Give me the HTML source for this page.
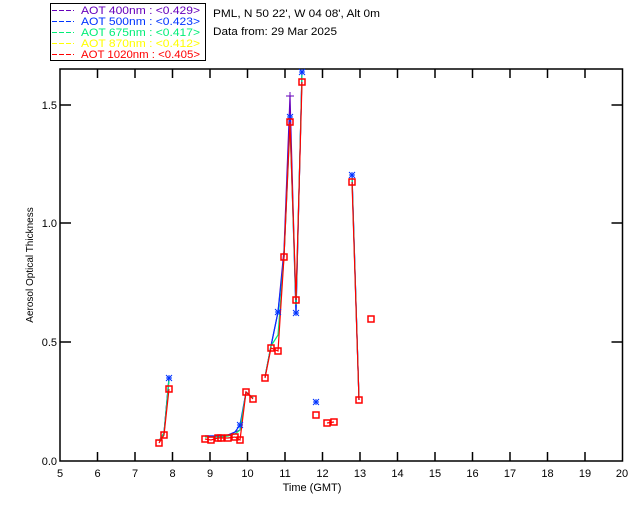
<!DOCTYPE html>
<html><head><meta charset="utf-8"><style>
html,body{margin:0;padding:0;background:#fff;}
svg{display:block;font-family:"Liberation Sans",sans-serif;font-size:11px;}
</style></head><body>
<svg width="640" height="512" viewBox="0 0 640 512" xmlns="http://www.w3.org/2000/svg">
<rect width="640" height="512" fill="#fff"/>
<!-- legend -->
<rect x="50.5" y="3.5" width="155" height="57" fill="none" stroke="#000"/>
<g stroke-width="1" stroke-dasharray="5,2">
<path d="M52 10.5h22" stroke="#6600bb"/>
<path d="M52 21.5h22" stroke="#0033ff"/>
<path d="M52 32.5h22" stroke="#00ee77"/>
<path d="M52 43.5h22" stroke="#ffff00"/>
<path d="M52 54.5h22" stroke="#ff0000"/>
</g>
<g font-size="11" xml:space="preserve">
<text x="81" y="14" fill="#6600bb" textLength="119" lengthAdjust="spacingAndGlyphs">AOT  400nm : &lt;0.429&gt;</text>
<text x="81" y="25" fill="#0033ff" textLength="119" lengthAdjust="spacingAndGlyphs">AOT  500nm : &lt;0.423&gt;</text>
<text x="81" y="36" fill="#00ee77" textLength="119" lengthAdjust="spacingAndGlyphs">AOT  675nm : &lt;0.417&gt;</text>
<text x="81" y="47" fill="#ffff00" textLength="119" lengthAdjust="spacingAndGlyphs">AOT  870nm : &lt;0.412&gt;</text>
<text x="81" y="58" fill="#ff0000" textLength="119" lengthAdjust="spacingAndGlyphs">AOT 1020nm : &lt;0.405&gt;</text>
<text x="213" y="17" fill="#000" textLength="167" lengthAdjust="spacingAndGlyphs">PML, N 50 22', W 04 08', Alt 0m</text>
<text x="213" y="35" fill="#000" textLength="124" lengthAdjust="spacingAndGlyphs">Data from: 29 Mar 2025</text>
</g>
<!-- axes -->
<g stroke="#000" stroke-width="1.5" fill="none">
<rect x="60" y="69" width="562.5" height="392"/>
<path d="M97.5 461v-9M135 461v-9M172.5 461v-9M210 461v-9M247.5 461v-9M285 461v-9M322.5 461v-9M360 461v-9M397.5 461v-9M435 461v-9M472.5 461v-9M510 461v-9M547.5 461v-9M585 461v-9
M97.5 69v9M135 69v9M172.5 69v9M210 69v9M247.5 69v9M285 69v9M322.5 69v9M360 69v9M397.5 69v9M435 69v9M472.5 69v9M510 69v9M547.5 69v9M585 69v9
M60 105h11M60 223h11M60 342h11M622.5 105h-11M622.5 223h-11M622.5 342h-11"/>
</g>
<g fill="#000" text-anchor="middle">
<text x="60" y="477">5</text><text x="97.5" y="477">6</text><text x="135" y="477">7</text><text x="172.5" y="477">8</text><text x="210" y="477">9</text><text x="247.5" y="477">10</text><text x="285" y="477">11</text><text x="322.5" y="477">12</text><text x="360" y="477">13</text><text x="397.5" y="477">14</text><text x="435" y="477">15</text><text x="472.5" y="477">16</text><text x="510" y="477">17</text><text x="547.5" y="477">18</text><text x="585" y="477">19</text><text x="622" y="477">20</text>
<text x="312" y="491">Time (GMT)</text>
<text transform="translate(33,265) rotate(-90)" font-size="10">Aerosol Optical Thickness</text>
</g>
<g fill="#000" text-anchor="end">
<text x="57" y="109">1.5</text><text x="57" y="227">1.0</text><text x="57" y="346">0.5</text><text x="57" y="465">0.0</text>
</g>
<!-- data lines -->
<g fill="none" stroke-width="1.2">
<path stroke="#6600bb" d="M159 441L164 433L169 378M205 436L211 436L218 436L221 436L228 435L235 432L240 430L246 392L253 398M265 377L271 346L278 312L284 250L290 96L296 312L302 72M352 175L359 400"/>
<path stroke="#0033ff" d="M159 441L164 433L169 378M205 436L211 436L218 436L221 436L228 435L235 432L240 425L246 392L253 398M265 377L271 346L278 312L284 257L290 117L296 313L302 72M352 175L359 400"/>
<path stroke="#00ee77" d="M159 441L164 433L169 380M205 437L211 437L218 437L221 437L228 436L235 434L240 430L246 392L253 398M265 377L271 346L278 335L284 257L290 125L296 305L302 74M352 178L359 400"/>
<path stroke="#ff0000" d="M159 443L164 435L169 389M205 439L211 440L218 438L221 438L228 438L235 437L240 440L246 392L253 399M265 378L271 348L278 351L284 257L290 122L296 300L302 82M327 423L334 422M352 182L359 400"/>
</g>
<!-- markers -->
<g fill="none" stroke="#0033ff" stroke-width="1">
<path d="M166 378h6M169 375v6M166 375l6 6M172 375l-6 6 M287 117h6M290 114v6M287 114l6 6M293 114l-6 6 M293 313h6M296 310v6M293 310l6 6M299 310l-6 6 M349 175h6M352 172v6M349 172l6 6M355 172l-6 6 M313 402h6M316 399v6M313 399l6 6M319 399l-6 6 M275 312h6M278 309v6M275 309l6 6M281 309l-6 6 M237 425h6M240 422v6M237 422l6 6M243 422l-6 6 M299 72h6M302 69v6M299 69l6 6M305 69l-6 6"/>
</g>
<path d="M290 92v12M286 96h8" stroke="#6600bb" stroke-width="1" fill="none"/>
<g fill="none" stroke="#ff0000" stroke-width="1.5">
<rect x="156" y="440" width="6" height="6"/><rect x="161" y="432" width="6" height="6"/><rect x="166" y="386" width="6" height="6"/>
<rect x="202" y="436" width="6" height="6"/><rect x="208" y="437" width="6" height="6"/><rect x="215" y="435" width="6" height="6"/><rect x="218" y="435" width="6" height="6"/><rect x="225" y="435" width="6" height="6"/><rect x="232" y="434" width="6" height="6"/><rect x="237" y="437" width="6" height="6"/><rect x="243" y="389" width="6" height="6"/><rect x="250" y="396" width="6" height="6"/>
<rect x="262" y="375" width="6" height="6"/><rect x="268" y="345" width="6" height="6"/><rect x="275" y="348" width="6" height="6"/><rect x="281" y="254" width="6" height="6"/><rect x="287" y="119" width="6" height="6"/><rect x="293" y="297" width="6" height="6"/><rect x="299" y="79" width="6" height="6"/>
<rect x="313" y="412" width="6" height="6"/><rect x="324" y="420" width="6" height="6"/><rect x="331" y="419" width="6" height="6"/><rect x="349" y="179" width="6" height="6"/><rect x="356" y="397" width="6" height="6"/><rect x="368" y="316" width="6" height="6"/>
</g>
</svg>
</body></html>
